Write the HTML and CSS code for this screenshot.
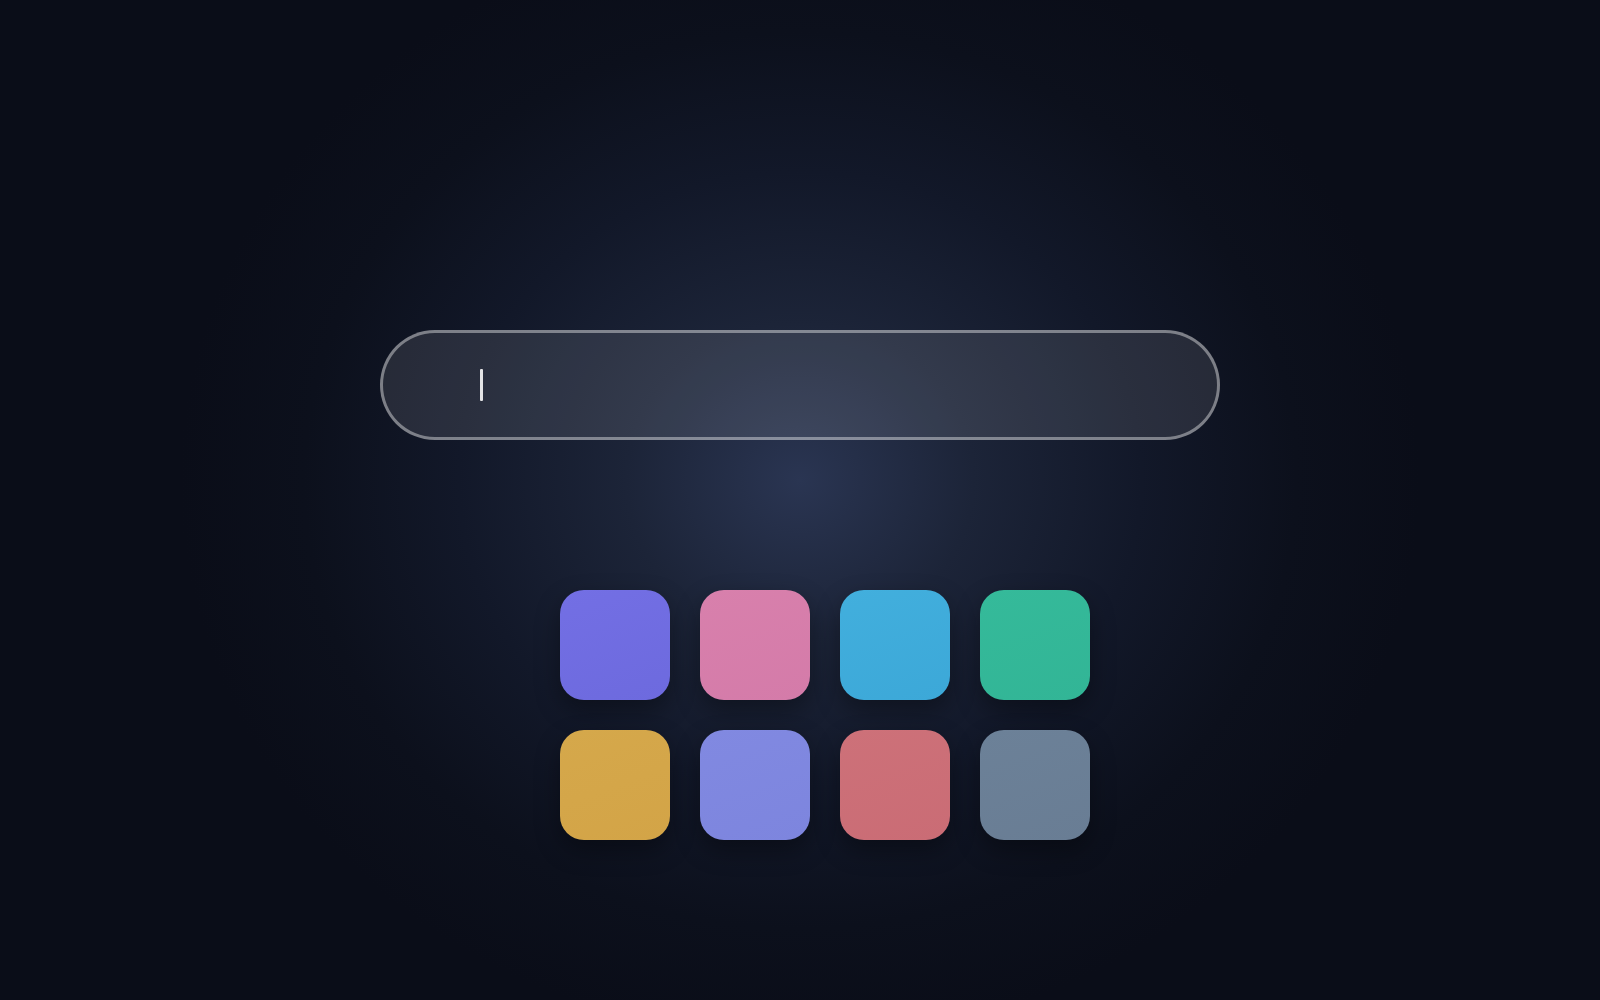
FILE: index.html
```html
<!DOCTYPE html>
<html lang="en">
<head>
<meta charset="utf-8">
<title>Launcher</title>
<link rel="stylesheet" href="styles.css">
</head>
<body>
<main class="stage">
  <div class="search">
    <span class="caret"></span>
  </div>
  <div class="grid-wrap">
    <div class="grid">
      <div class="tile t1"></div>
      <div class="tile t2"></div>
      <div class="tile t3"></div>
      <div class="tile t4"></div>
      <div class="tile t5"></div>
      <div class="tile t6"></div>
      <div class="tile t7"></div>
      <div class="tile t8"></div>
    </div>
  </div>
</main>
</body>
</html>
```
FILE: styles.css
```css
html, body {
  margin: 0;
  padding: 0;
  height: 100%;
}
body {
  font-family: "Inter", "Liberation Sans", sans-serif;
  background: #0a0d18;
  overflow: hidden;
}
.stage {
  width: 1600px;
  height: 1000px;
  box-sizing: border-box;
  padding-top: 330px;
  display: flex;
  flex-direction: column;
  align-items: center;
  background: radial-gradient(ellipse 620px 560px at 800px 480px, #2a3552 0%, #1c2438 28%, #121829 55%, #0c101c 80%, #0a0d18 100%);
}
.search {
  width: 840px;
  height: 110px;
  box-sizing: border-box;
  border: 3px solid rgba(255, 255, 255, 0.4);
  border-radius: 55px;
  background: rgba(255, 255, 255, 0.1);
  display: flex;
  align-items: center;
  padding-left: 97px;
}
.caret {
  display: block;
  width: 3px;
  height: 32px;
  background: #e4e4e6;
  border-radius: 1px;
}
.grid-wrap {
  margin-top: 150px;
  padding-left: 50px;
}
.grid {
  display: grid;
  grid-template-columns: repeat(4, 110px);
  grid-auto-rows: 110px;
  gap: 30px;
}
.tile {
  border-radius: 24px;
  box-shadow: 0 10px 24px rgba(0, 0, 0, 0.35);
}
.t1 { background: linear-gradient(160deg, #736fe4, #6d6ade); }
.t2 { background: linear-gradient(160deg, #d880ac, #d47ba9); }
.t3 { background: linear-gradient(160deg, #42afdd, #3ca8d8); }
.t4 { background: linear-gradient(160deg, #35ba9a, #32b596); }
.t5 { background: linear-gradient(160deg, #d5a84b, #d3a447); }
.t6 { background: linear-gradient(160deg, #8189e1, #7d85de); }
.t7 { background: linear-gradient(160deg, #cd7179, #ca6c75); }
.t8 { background: linear-gradient(160deg, #6c8198, #697d94); }
```
